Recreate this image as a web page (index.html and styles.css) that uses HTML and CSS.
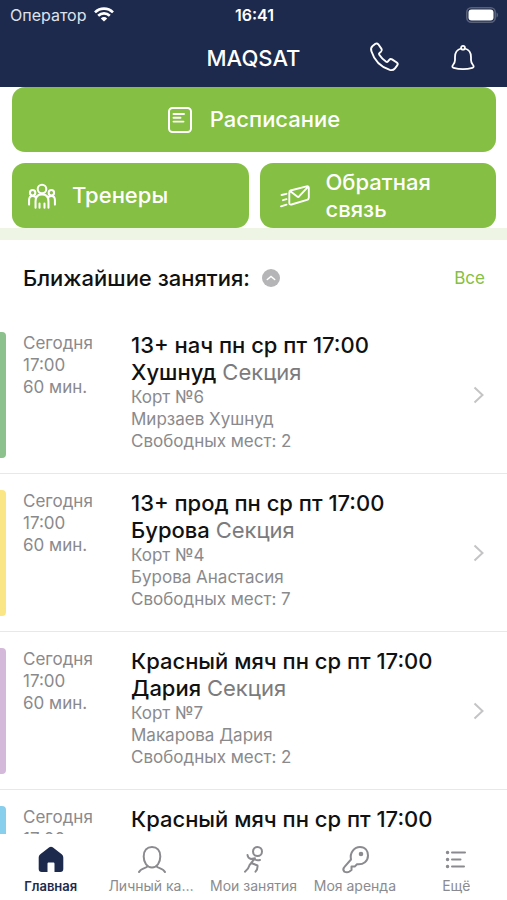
FILE: index.html
```html
<!DOCTYPE html>
<html lang="ru">
<head>
<meta charset="utf-8">
<meta name="viewport" content="width=device-width, initial-scale=1">
<title>MAQSAT</title>
<link rel="stylesheet" href="styles.css">
</head>
<body>
<div class="app">
  <header class="header">
    <div class="status">
      <div class="carrier">
        <span>Оператор</span>
        <svg width="20" height="15" viewBox="0 0 20 15" fill="none" stroke="#fff" stroke-width="2.6"><path d="M1 5.4C6 .4 14 .4 19 5.4M4.2 8.8c3.3-3.2 8.3-3.2 11.6 0"/><path d="M10 14.6 6.8 11.4c1.8-1.8 4.6-1.8 6.4 0z" fill="#fff" stroke="none"/></svg>
      </div>
      <time class="clock">16:41</time>
      <svg class="battery" width="33" height="16" viewBox="0 0 33 16"><rect x=".8" y=".8" width="28.4" height="14.4" rx="4.5" fill="none" stroke="#596179" stroke-width="1.6"/><rect x="2.5" y="2.5" width="25" height="11" rx="3" fill="#fff"/><path d="M30.500 5.500c2 .6 2 4.400 0 5z" fill="#596179"/></svg>
    </div>
    <div class="navbar">
      <h1 class="brand">MAQSAT</h1>
      <div class="actions">
        <button class="icon-button" aria-label="Позвонить"><svg width="34" height="34" viewBox="0 0 32 32" fill="none" stroke="#fff" stroke-width="1.8" stroke-linejoin="round"><path d="M4.300 4.800 7 2.700c.9-.7 2-.5 2.700.4l3 4.300c.6.9.4 1.900-.4 2.600l-1.500 1.200c-.6.5-.6 1.100-.2 1.700 1.900 2.900 3.700 4.700 6.500 6.600.6.4 1.200.3 1.700-.3l1.200-1.500c.7-.8 1.700-1 2.600-.4l4.500 3c.9.700 1.100 1.800.4 2.700l-2.100 2.700c-1.200 1.500-3 2-4.900 1.500C12.500 24.700 6 18.500 3.200 9.700c-.6-1.900-.3-3.800 1.100-4.900z"/></svg></button>
        <button class="icon-button" aria-label="Уведомления"><svg width="32" height="32" viewBox="0 0 32 32" fill="none" stroke="#fff" stroke-width="1.8" stroke-linejoin="round" stroke-linecap="round"><circle cx="16" cy="5.700" r="1.900"/><path d="M14.200 6.500c-3.900 1-6.200 3.800-6.200 8.500v3c0 2-.5 3.300-2 5-1.100 1.300-.8 2.400.6 2.800 5.500 1.500 13.300 1.500 18.800 0 1.400-.4 1.700-1.500.6-2.800-1.500-1.700-2-3-2-5v-3c0-4.700-2.300-7.500-6.200-8.500"/></svg></button>
      </div>
    </div>
  </header>

  <main class="content">
    <nav class="shortcuts" aria-label="Быстрые действия">
      <a class="tile tile-wide" href="#schedule">
        <svg width="24" height="26" viewBox="0 0 24 26" fill="none" stroke="#fff" stroke-width="2" stroke-linecap="round"><rect x="1" y="1" width="22" height="24" rx="3.500"/><path d="M5.500 7h10.500M5.500 10.800h7M5.500 14.600h10" stroke-width="1.900"/></svg>
        <span>Расписание</span>
      </a>
      <a class="tile" href="#coaches">
        <svg width="28" height="28" viewBox="1 1 26 26" fill="none" stroke="#fff" stroke-width="1.900" stroke-linecap="round"><circle cx="14" cy="7.500" r="4"/><circle cx="5.300" cy="11" r="2.500"/><circle cx="22.700" cy="11" r="2.500"/><path d="M8 25v-6c0-4 2.300-6.500 6-6.500s6 2.500 6 6.500v6M11.700 25v-4M16.300 25v-4M2 22v-4c0-2.300 1.200-4 3.300-4 1 0 1.800.2 2.500.8M26 22v-4c0-2.300-1.200-4-3.300-4-1 0-1.800.2-2.500.8"/></svg>
        <span>Тренеры</span>
      </a>
      <a class="tile" href="#feedback">
        <svg width="34" height="28" viewBox="-3 0 34 28" fill="none" stroke="#fff" stroke-width="1.900" stroke-linecap="round" stroke-linejoin="round"><path d="m11.500 8.500 16-4.200c1.500-.4 2.300.3 2.300 1.700v9.500c0 1.200-.5 2-1.800 2.400l-15.500 4.600c-1.500.4-2.200-.2-2.200-1.700v-10c0-1.200.2-2 1.200-2.300zM11 9l7.200 5.600c.8.600 1.500.4 2.100-.4L29 4.800M2.500 13l5-1.200M4 18.200l3.500-1M2 24.300l5.500-1.700"/></svg>
        <span>Обратная связь</span>
      </a>
    </nav>

    <section class="upcoming">
      <div class="section-head">
        <h2 class="section-title">Ближайшие занятия:</h2>
        <button class="collapse" aria-label="Свернуть"><svg width="18" height="18" viewBox="0 0 18 18"><circle cx="9" cy="9" r="9" fill="#b5b5b7"/><path d="m5.300 10.500 3.700-3 3.700 3" fill="none" stroke="#fff" stroke-width="1.500" stroke-linecap="round"/></svg></button>
        <a class="all" href="#all">Все</a>
      </div>
      <ul class="lessons">
        <li><a class="lesson green" href="#lesson-1">
          <div class="when"><div>Сегодня</div><div>17:00</div><div>60 мин.</div></div>
          <div class="info"><h3 class="name">13+ нач пн ср пт 17:00 Хушнуд <span class="kind">Секция</span></h3><div>Корт №6</div><div>Мирзаев Хушнуд</div><div>Свободных мест: 2</div></div>
          <svg class="chevron" width="12" height="18" viewBox="0 0 12 18"><path d="m1.500 1.500 8 7.500-8 7.500"/></svg>
        </a></li>
        <li><a class="lesson yellow" href="#lesson-2">
          <div class="when"><div>Сегодня</div><div>17:00</div><div>60 мин.</div></div>
          <div class="info"><h3 class="name">13+ прод пн ср пт 17:00 Бурова <span class="kind">Секция</span></h3><div>Корт №4</div><div>Бурова Анастасия</div><div>Свободных мест: 7</div></div>
          <svg class="chevron" width="12" height="18" viewBox="0 0 12 18"><path d="m1.500 1.500 8 7.500-8 7.500"/></svg>
        </a></li>
        <li><a class="lesson pink" href="#lesson-3">
          <div class="when"><div>Сегодня</div><div>17:00</div><div>60 мин.</div></div>
          <div class="info"><h3 class="name">Красный мяч пн ср пт 17:00 Дария <span class="kind">Секция</span></h3><div>Корт №7</div><div>Макарова Дария</div><div>Свободных мест: 2</div></div>
          <svg class="chevron" width="12" height="18" viewBox="0 0 12 18"><path d="m1.500 1.500 8 7.500-8 7.500"/></svg>
        </a></li>
        <li><a class="lesson blue" href="#lesson-4">
          <div class="when"><div>Сегодня</div><div>17:00</div></div>
          <div class="info"><h3 class="name">Красный мяч пн ср пт 17:00</h3></div>
          <svg class="chevron" width="12" height="18" viewBox="0 0 12 18"><path d="m1.500 1.500 8 7.500-8 7.500"/></svg>
        </a></li>
      </ul>
    </section>
  </main>

  <nav class="tabs" aria-label="Разделы">
    <a class="tab active" href="#home"><svg width="32" height="32" viewBox="0 0 32 32"><path d="M14.300 3.300c1-.8 2.400-.8 3.400 0l9 7c1.100.9 1.600 2 1.600 3.400V25c0 2-1 3-3 3h-5.800v-8.200c0-.8-.5-1.300-1.300-1.300h-4.400c-.8 0-1.300.5-1.300 1.300V28H6.700c-2 0-3-1-3-3V13.700c0-1.400.5-2.500 1.600-3.400z" fill="#1d2a4d"/></svg><span>Главная</span></a>
    <a class="tab" href="#profile"><svg width="32" height="32" viewBox="0 0 32 32"><path d="M16 3c5 0 8.300 3.500 8.300 9.500S21 23.500 16 23.500 7.700 18.500 7.700 12.500 11 3 16 3zM11.500 21.800c-.3 2.500-6.500 2-8.500 6.200M20.500 21.800c.3 2.500 6.500 2 8.500 6.200"/></svg><span>Личный кабинет</span></a>
    <a class="tab" href="#lessons"><svg width="32" height="32" viewBox="0 0 32 32"><circle cx="20.500" cy="7.500" r="4.500"/><path d="M10.500 11c.3 2.500 1.500 3.500 3.500 4l4-.8-5.500 7c-.8 3-2.200 4.800-4.500 6.500M15.500 19.500l5 2c.3 2.500-.5 4.500-2 6.200M18 15.500c1.500.9 3 1 5 .5"/></svg><span>Мои занятия</span></a>
    <a class="tab" href="#rent"><svg width="32" height="32" viewBox="0 0 32 32"><path d="M12 15.500c-1.500-7 3.500-12.500 9-12.500s8 4 8 8.500c0 5.500-4.500 9.500-11 8.700l-2.300 2.400h-3.200V26l-2 1.500c-1.500 1-3.500 1-5.200.2-1.300-1.500-1.300-3.200.2-4.800z"/><circle cx="22" cy="10" r="1.300" fill="#8b8b8f"/></svg><span>Моя аренда</span></a>
    <a class="tab" href="#more"><svg width="32" height="32" viewBox="0 0 32 32"><path d="M12 8.500h13M12 15.500h8.500M12 22.500h12"/><path d="M7.500 8.500h.1M7.500 15.500h.1M7.500 22.500h.1" stroke-width="3.400"/></svg><span>Ещё</span></a>
  </nav>
</div>
</body>
</html>
```
FILE: styles.css
```css
* { box-sizing: border-box; }
body {
  margin: 0;
  background: #fff;
  color: #111;
  font-family: Inter, "Liberation Sans", sans-serif;
}
h1, h2, h3, ul { margin: 0; padding: 0; }
ul { list-style: none; }
a { color: inherit; text-decoration: none; }
button { border: 0; padding: 0; background: none; display: flex; }
svg { display: block; flex: none; }

.app { height: 100vh; display: flex; flex-direction: column; }

.header { background: #1d2a4d; color: #fff; }
.status {
  display: grid;
  grid-template-columns: 1fr auto 1fr;
  align-items: center;
  height: 29px;
  padding: 0 8px 0 10px;
  font-size: 16px;
}
.carrier { display: flex; align-items: center; gap: 8px; color: #dfe2ea; }
.clock { font-weight: 600; }
.battery { justify-self: end; }
.navbar {
  display: grid;
  grid-template-columns: 1fr auto 1fr;
  align-items: center;
  height: 58px;
  padding: 0 28px;
}
.brand { grid-column: 2; font-size: 22px; font-weight: 500; }
.actions { display: flex; align-items: center; justify-content: flex-end; gap: 45px; }

.content { flex: 1; min-height: 0; overflow: hidden; }
.shortcuts {
  display: grid;
  grid-template-columns: 1fr 1fr;
  gap: 11px;
  padding: 0 11px 12px 12px;
  background: linear-gradient(#fff, #fff) no-repeat 0 0 / 100% calc(100% - 12px), #eef5e4;
}
.tile {
  display: flex;
  align-items: center;
  gap: 16px;
  height: 65px;
  padding: 0 16px;
  border-radius: 13px;
  background: #85bf43;
  color: #fff;
  font-size: 22px;
  line-height: 27px;
  font-weight: 500;
}
.tile-wide { grid-column: 1 / -1; justify-content: center; gap: 18px; }

.section-head { display: flex; align-items: center; height: 76px; padding: 0 22px 0 23px; gap: 12px; }
.section-title { font-size: 22px; font-weight: 500; }
.all { margin-left: auto; color: #85bf43; font-size: 17px; }

.lesson {
  display: flex;
  min-height: 158px;
  padding: 16px 22px 15px 0;
  border-bottom: 1px solid #e8e8ea;
  color: #8a8a8d;
  font-size: 17px;
  line-height: 22px;
}
.lesson::before {
  content: "";
  width: 6px;
  height: 126px;
  margin-right: 17px;
  border-radius: 0 4px 4px 0;
  background: var(--accent);
}
.green { --accent: #8cc08c; }
.yellow { --accent: #fbe686; }
.pink { --accent: #d5b9da; }
.blue { --accent: #87cfed; }
.when { width: 108px; }
.info { flex: 1; padding-right: 16px; }
.name { max-width: 320px; color: #111; font-size: 22px; line-height: 27px; font-weight: 500; }
.kind { color: #7b7b7e; font-weight: 400; }
.chevron { align-self: center; fill: none; stroke: #c4c4c6; stroke-width: 2; }

.tabs { display: grid; grid-template-columns: repeat(5, minmax(0, 1fr)); height: 66px; padding-top: 10px; background: #fff; }
.tab {
  display: flex;
  flex-direction: column;
  align-items: center;
  padding: 0 7px;
  color: #8b8b8f;
  font-size: 14px;
  line-height: 20px;
}
.tab svg { fill: none; stroke: #8b8b8f; stroke-width: 2; stroke-linecap: round; stroke-linejoin: round; }
.tab.active { color: #1d2a4d; font-size: 13px; font-weight: 600; }
.tab.active svg { stroke: none; }
.tab span { max-width: 100%; overflow: hidden; text-overflow: ellipsis; white-space: nowrap; }
```
